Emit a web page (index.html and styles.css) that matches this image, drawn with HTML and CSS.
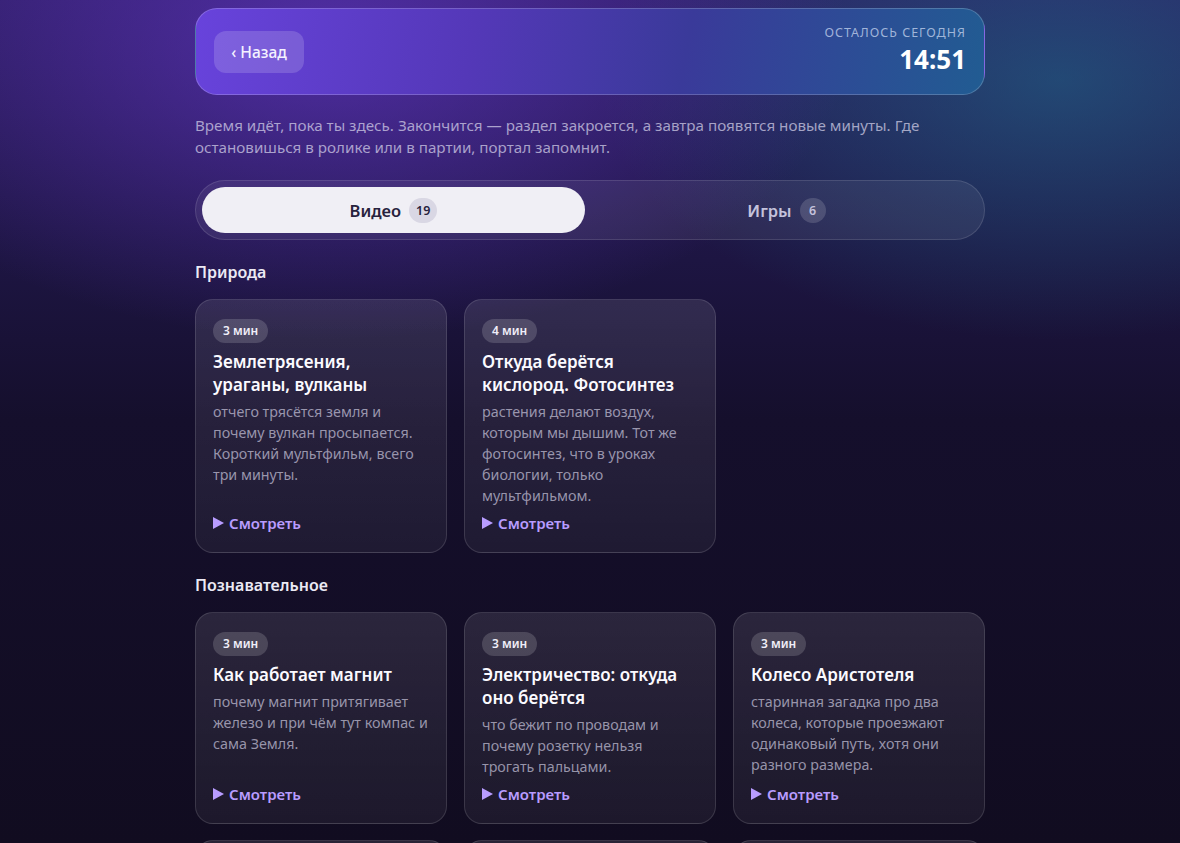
FILE: index.html
```html
<!DOCTYPE html>
<html lang="ru">

<head>
    <meta charset="UTF-8">
    <meta name="viewport" content="width=device-width, initial-scale=1.0">
    <title>Осталось сегодня</title>
    <link rel="stylesheet" href="styles.css">
</head>

<body>

    <div class="page">
        <header class="topbar">
            <button class="back">&lsaquo; Назад</button>
            <div class="timer">
                <span class="timer-label">Осталось сегодня</span>
                <span class="timer-value">14:51</span>
            </div>
        </header>

        <p class="intro">Время идёт, пока ты здесь. Закончится — раздел закроется, а завтра появятся новые минуты. Где остановишься в ролике или в партии, портал запомнит.</p>

        <nav class="tabs">
            <button class="tab active">Видео <span class="count">19</span></button>
            <button class="tab">Игры <span class="count">6</span></button>
        </nav>

        <section class="group">
            <h2>Природа</h2>
            <div class="cards">
                <article class="card">
                    <span class="len">3 мин</span>
                    <h3>Землетрясения, ураганы, вулканы</h3>
                    <p>отчего трясётся земля и почему вулкан просыпается. Короткий мультфильм, всего три минуты.</p>
                    <a class="watch" href="#"><svg width="11" height="12" viewBox="0 0 11 12"><path d="M0 0 L11 6 L0 12 Z" fill="currentColor"/></svg>Смотреть</a>
                </article>
                <article class="card">
                    <span class="len">4 мин</span>
                    <h3>Откуда берётся кислород. Фотосинтез</h3>
                    <p>растения делают воздух, которым мы дышим. Тот же фотосинтез, что в уроках биологии, только мультфильмом.</p>
                    <a class="watch" href="#"><svg width="11" height="12" viewBox="0 0 11 12"><path d="M0 0 L11 6 L0 12 Z" fill="currentColor"/></svg>Смотреть</a>
                </article>
            </div>
        </section>

        <section class="group">
            <h2>Познавательное</h2>
            <div class="cards">
                <article class="card">
                    <span class="len">3 мин</span>
                    <h3>Как работает магнит</h3>
                    <p>почему магнит притягивает железо и при чём тут компас и сама Земля.</p>
                    <a class="watch" href="#"><svg width="11" height="12" viewBox="0 0 11 12"><path d="M0 0 L11 6 L0 12 Z" fill="currentColor"/></svg>Смотреть</a>
                </article>
                <article class="card">
                    <span class="len">3 мин</span>
                    <h3>Электричество: откуда оно берётся</h3>
                    <p>что бежит по проводам и почему розетку нельзя трогать пальцами.</p>
                    <a class="watch" href="#"><svg width="11" height="12" viewBox="0 0 11 12"><path d="M0 0 L11 6 L0 12 Z" fill="currentColor"/></svg>Смотреть</a>
                </article>
                <article class="card">
                    <span class="len">3 мин</span>
                    <h3>Колесо Аристотеля</h3>
                    <p>старинная загадка про два колеса, которые проезжают одинаковый путь, хотя они разного размера.</p>
                    <a class="watch" href="#"><svg width="11" height="12" viewBox="0 0 11 12"><path d="M0 0 L11 6 L0 12 Z" fill="currentColor"/></svg>Смотреть</a>
                </article>
                <article class="card"></article>
                <article class="card"></article>
                <article class="card"></article>
            </div>
        </section>
    </div>

</body>

</html>
```

FILE: styles.css
```css
* {
    box-sizing: border-box;
    padding: 0;
    margin: 0;
}

body {
    min-height: 100vh;
    font-family: "Noto Sans", "Open Sans", sans-serif;
    color: #f2f0fa;
    background-color: #120d22;
    background-image:
        radial-gradient(ellipse 520px 300px at 330px 40px, rgba(110, 60, 220, 0.55), transparent),
        radial-gradient(ellipse 460px 260px at 1060px 80px, rgba(30, 110, 140, 0.55), transparent),
        linear-gradient(180deg, #2d1d62 0px, #1d1542 260px, #150f2c 420px, #110c20 843px);
    background-repeat: no-repeat;
    overflow: hidden;
}

.page {
    max-width: 790px;
    margin: 0 auto;
    padding-top: 8px;
}

.topbar {
    display: flex;
    justify-content: space-between;
    align-items: center;
    height: 87px;
    padding: 0 18px;
    border-radius: 22px;
    border: 1px solid rgba(255, 255, 255, 0.2);
    background: linear-gradient(100deg, #6843dc 0%, #5438b8 35%, #3a3a9a 62%, #215c92 100%);
}

.back {
    height: 42px;
    width: 90px;
    border: none;
    border-radius: 12px;
    background: rgba(255, 255, 255, 0.16);
    color: #f4f2ff;
    font-family: inherit;
    font-size: 15.5px;
    font-weight: 500;
}

.timer {
    display: flex;
    flex-direction: column;
    align-items: flex-end;
    margin-bottom: 6px;
}

.timer-label {
    font-size: 12.5px;
    letter-spacing: 1px;
    text-transform: uppercase;
    color: rgba(200, 215, 240, 0.75);
}

.timer-value {
    margin-top: 3px;
    font-size: 26px;
    font-weight: 700;
    line-height: 30px;
    color: #fff;
}

.intro {
    margin: 19px 0 22px;
    font-size: 15.2px;
    line-height: 22px;
    color: rgba(215, 212, 235, 0.72);
}

.tabs {
    display: grid;
    grid-template-columns: 1fr 1fr;
    gap: 10px;
    padding: 6px;
    border-radius: 30px;
    border: 1px solid rgba(255, 255, 255, 0.12);
    background: rgba(255, 255, 255, 0.07);
}

.tab {
    display: flex;
    align-items: center;
    justify-content: center;
    gap: 8px;
    height: 46px;
    border: none;
    border-radius: 23px;
    background: transparent;
    color: #c4c2dc;
    font-family: inherit;
    font-size: 16.5px;
    font-weight: 600;
}

.tab.active {
    background: #f0eff5;
    color: #27223d;
}

.count {
    display: inline-flex;
    align-items: center;
    justify-content: center;
    min-width: 26px;
    height: 25px;
    padding: 0 7px;
    border-radius: 13px;
    font-size: 12.5px;
    font-weight: 600;
    background: rgba(255, 255, 255, 0.15);
}

.tab.active .count {
    background: #d9d7e4;
}

.group h2 {
    margin: 21px 0 16px;
    font-size: 16px;
    font-weight: 600;
    line-height: 22px;
    color: #ebe9f4;
}

.cards {
    display: grid;
    grid-template-columns: repeat(3, 1fr);
    gap: 16px 17px;
}

.card {
    display: flex;
    flex-direction: column;
    align-items: flex-start;
    min-height: 200px;
    padding: 19px 17px 19px;
    border-radius: 18px;
    border: 1px solid rgba(255, 255, 255, 0.13);
    background: linear-gradient(180deg, rgba(255, 255, 255, 0.1), rgba(255, 255, 255, 0.05));
}

.len {
    height: 24px;
    padding: 0 10px;
    line-height: 24px;
    border-radius: 12px;
    background: rgba(255, 255, 255, 0.16);
    font-size: 12px;
    font-weight: 600;
    color: #f0eef8;
}

.card h3 {
    margin-top: 7px;
    font-size: 17px;
    font-weight: 600;
    line-height: 23px;
    color: #fbfaff;
}

.card p {
    margin-top: 5px;
    font-size: 14.3px;
    line-height: 21px;
    color: rgba(215, 212, 232, 0.66);
}

.watch {
    display: flex;
    align-items: center;
    gap: 5px;
    margin-top: auto;
    padding-top: 7px;
    font-size: 15px;
    font-weight: 600;
    line-height: 20px;
    color: #b89cff;
    text-decoration: none;
}
```
